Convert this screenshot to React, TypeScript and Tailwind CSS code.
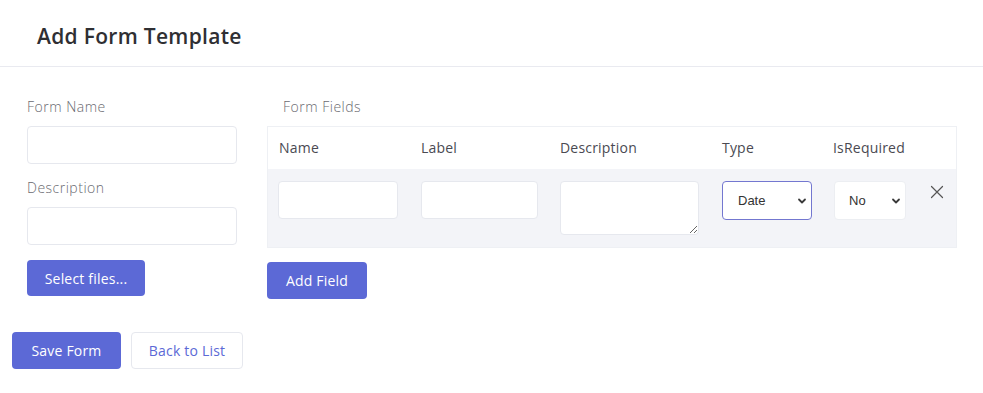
import { useState } from 'react';

type Field = {
  name: string;
  label: string;
  description: string;
  type: string;
  isRequired: string;
};

const Chevron = () => (
  <svg className="pointer-events-none absolute right-[5px] top-1/2 -translate-y-1/2 w-[10px] h-[10px]" viewBox="0 0 10 10" fill="none" stroke="#3a3a3a" strokeWidth={1.8} strokeLinecap="round" strokeLinejoin="round">
    <path d="M2 3.5l3 3 3-3" />
  </svg>
);

export default function App() {
  const [fields, setFields] = useState<Field[]>([
    { name: '', label: '', description: '', type: 'Date', isRequired: 'No' },
  ]);

  const inputCls = "h-[38px] bg-white border border-[#e6e8ee] rounded-[4px] px-2 text-sm outline-none";

  return (
    <div className="min-h-screen bg-white text-[#333] font-['Open_Sans',sans-serif] tracking-[0.2px]">
      <div className="h-[67px] border-b border-[#e9eaf0] flex items-center px-[37px] pt-[7px]">
        <h1 className="text-[21px] font-semibold text-[#2f2f33] tracking-[0.3px]">Add Form Template</h1>
      </div>

      <div className="px-[12px] pt-[31px]">
        <div className="flex gap-[30px] pl-[15px]">
          {/* left column */}
          <div className="w-[210px] flex flex-col">
            <label className="text-[14px] font-light text-[#6a6a70] leading-[18px] tracking-[0.5px]">Form Name</label>
            <input className={`${inputCls} mt-[10px] w-full`} />
            <label className="text-[14px] font-light text-[#6a6a70] leading-[18px] mt-[15px] tracking-[0.5px]">Description</label>
            <input className={`${inputCls} mt-[10px] w-full`} />
            <button className="mt-[15px] w-[118px] h-[36px] bg-[#5c69d6] text-white text-[14px] rounded-[4px]">
              Select files...
            </button>
          </div>

          {/* right column */}
          <div className="w-[690px] flex flex-col">
            <label className="text-[14px] font-light text-[#6a6a70] leading-[18px] pl-[16px] tracking-[0.5px]">Form Fields</label>
            <div className="mt-[10px] border border-[#eef0f4]">
              <div className="grid grid-cols-[142px_139px_162px_112px_97px_37px] h-[42px] items-center text-[14px] font-medium text-[#4a4a52] pb-[1px]">
                <div className="pl-[11px]">Name</div>
                <div className="pl-[11px]">Label</div>
                <div className="pl-[11px]">Description</div>
                <div className="pl-[11px]">Type</div>
                <div className="pl-[10px]">IsRequired</div>
                <div />
              </div>
              {fields.map((f, i) => (
                <div key={i} className="grid grid-cols-[142px_139px_162px_112px_97px_37px] bg-[#f3f4f8] pt-[12px] pb-[12px] items-start">
                  <div className="pl-[10px]">
                    <input className={`${inputCls} w-[120px]`} value={f.name} onChange={() => {}} />
                  </div>
                  <div className="pl-[11px]">
                    <input className={`${inputCls} w-[117px]`} value={f.label} onChange={() => {}} />
                  </div>
                  <div className="pl-[11px]">
                    <textarea className="w-[139px] h-[54px] bg-white border border-[#e6e8ee] rounded-[4px] block" value={f.description} onChange={() => {}} />
                  </div>
                  <div className="pl-[11px]">
                    <div className="relative w-[90px] h-[39px]">
                      <select className="appearance-none w-full h-full bg-white border border-[#7377d0] rounded-[4px] pl-[15px] text-[13px] text-[#333] font-['Liberation_Sans',sans-serif] tracking-normal outline-none" value={f.type} onChange={() => {}}>
                        <option>Date</option>
                        <option>Text</option>
                        <option>Number</option>
                      </select>
                      <Chevron />
                    </div>
                  </div>
                  <div className="pl-[11px]">
                    <div className="relative w-[72px] h-[39px]">
                      <select className="appearance-none w-full h-full bg-white border border-[#eceef2] rounded-[4px] pl-[14px] text-[13px] text-[#333] font-['Liberation_Sans',sans-serif] tracking-normal outline-none" value={f.isRequired} onChange={() => {}}>
                        <option>No</option>
                        <option>Yes</option>
                      </select>
                      <Chevron />
                    </div>
                  </div>
                  <div className="pl-[10px]">
                    <button onClick={() => setFields(fields.filter((_, j) => j !== i))}>
                      <svg className="w-[14px] h-[14px]" viewBox="0 0 14 14" fill="none" stroke="#555" strokeWidth={1.2} strokeLinecap="round">
                        <path d="M1.5 1.5l11 11M12.5 1.5l-11 11" />
                      </svg>
                    </button>
                  </div>
                </div>
              ))}
            </div>
            <button
              onClick={() => setFields([...fields, { name: '', label: '', description: '', type: 'Date', isRequired: 'No' }])}
              className="mt-[14px] w-[100px] h-[37px] bg-[#5c69d6] text-white text-[14px] rounded-[4px]"
            >
              Add Field
            </button>
          </div>
        </div>

        <div className="flex gap-[10px] mt-[33px]">
          <button className="w-[109px] h-[37px] bg-[#5c69d6] text-white text-[14px] rounded-[4px]">Save Form</button>
          <button className="w-[112px] h-[37px] bg-white border border-[#e6e8ee] text-[#5c69d6] text-[14px] rounded-[4px]">Back to List</button>
        </div>
      </div>
    </div>
  );
}
